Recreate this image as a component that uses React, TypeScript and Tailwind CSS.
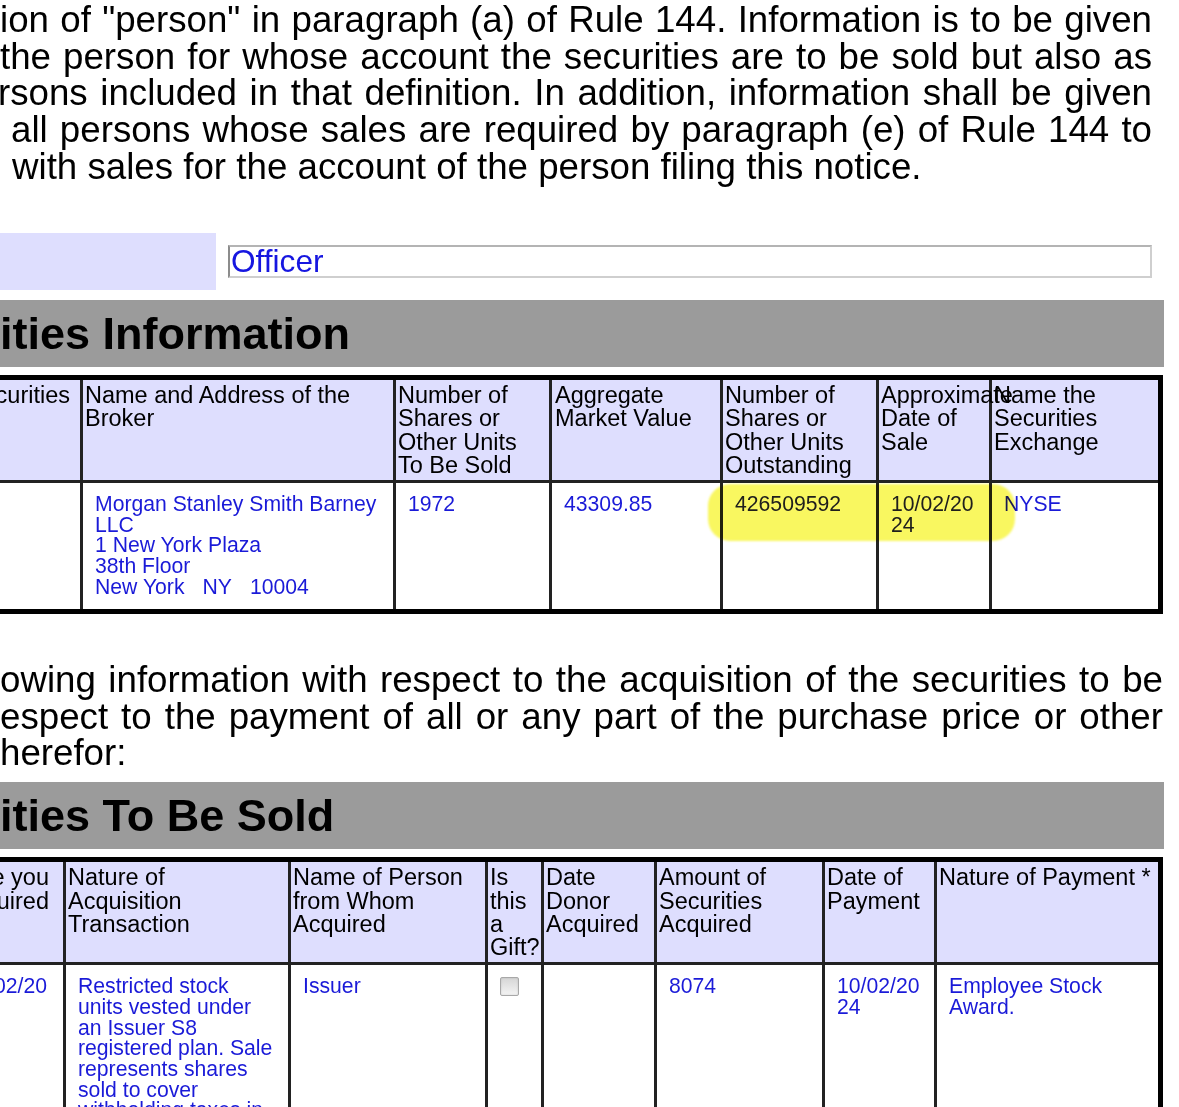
import React from "react";

const FONT = "font-['Liberation_Sans',Arial,sans-serif]";
const HEAD = "bg-[#dedefe] pt-[4px] pl-[2px] text-[23.5px] leading-[23.4px] text-black whitespace-nowrap";
const BODY = "bg-white pt-[11px] pl-[12px] text-[21.2px] leading-[20.7px] text-[#1a1ad8] whitespace-nowrap";
const JLINE = "text-justify [text-align-last:justify]";

function Lines({ items }: { items: string[] }) {
  return (
    <>
      {items.map((t, i) => (
        <div key={i}>{t}</div>
      ))}
    </>
  );
}

export default function App() {
  return (
    <div className={`relative w-[1179px] h-[1107px] overflow-hidden bg-white text-black ${FONT}`}>
      <div className="flex flex-col">
        {/* Paragraph 1 */}
        <div className="mt-[2px] w-[1152px] text-[36.7px] leading-[36.7px]">
          <div className={JLINE}>ion of "person" in paragraph (a) of Rule 144. Information is to be given</div>
          <div className={JLINE}>the person for whose account the securities are to be sold but also as</div>
          <div className={`${JLINE} -ml-[2px]`}>rsons included in that definition. In addition, information shall be given</div>
          <div className={`${JLINE} pl-[11px]`}>all persons whose sales are required by paragraph (e) of Rule 144 to</div>
          <div className="pl-[12px]">with sales for the account of the person filing this notice.</div>
        </div>

        {/* Relationship row */}
        <div className="mt-[47.5px] flex h-[57px] items-start">
          <div className="h-full w-[216px] bg-[#dedefe]" />
          <div className="ml-[12px] mt-[12px] h-[33px] w-[924px] border-2 border-[#cfcfcf] border-l-[#8c8c8c] border-t-[#b4b4b4] pl-[1px] text-[31.6px] leading-[29px] text-[#1616e0]">
            Officer
          </div>
        </div>

        {/* Title bar 1 */}
        <div className="mt-[10px] h-[67px] w-[1164px] bg-[#9b9b9b] pt-[11px] text-[45px] font-bold leading-[45px] text-black">
          ities Information
        </div>

        {/* Table 1 */}
        <div className="mt-[8px] -ml-[105px] grid w-[1268px] grid-cols-[180px_310px_153px_168px_153px_110px_166px] grid-rows-[100px_126px] gap-[3px] border-[5px] border-black bg-[#222]">
          <div className={`${HEAD} text-right pr-[10px]`}>curities</div>
          <div className={HEAD}><Lines items={["Name and Address of the", "Broker"]} /></div>
          <div className={HEAD}><Lines items={["Number of", "Shares or", "Other Units", "To Be Sold"]} /></div>
          <div className={`${HEAD} pl-[3px]`}><Lines items={["Aggregate", "Market Value"]} /></div>
          <div className={HEAD}><Lines items={["Number of", "Shares or", "Other Units", "Outstanding"]} /></div>
          <div className={`${HEAD} relative z-10 !bg-transparent`}>
            <div className="absolute inset-0 -z-10 bg-[#dedefe]" />
            <Lines items={["Approximate", "Date of", "Sale"]} />
          </div>
          <div className={HEAD}><Lines items={["Name the", "Securities", "Exchange"]} /></div>

          <div className={BODY} />
          <div className={BODY}>
            <Lines items={["Morgan Stanley Smith Barney", "LLC", "1 New York Plaza", "38th Floor"]} />
            <div>
              New York<span className="inline-block w-[18px]" />NY<span className="inline-block w-[18px]" />10004
            </div>
          </div>
          <div className={BODY}>1972</div>
          <div className={BODY}>43309.85</div>
          <div className={BODY}><span className="text-[#20204a]">426509592</span></div>
          <div className={BODY}><div className="text-[#20204a]"><Lines items={["10/02/20", "24"]} /></div></div>
          <div className={BODY}>NYSE</div>
        </div>

        {/* Paragraph 2 */}
        <div className="mt-[48px] w-[1163px] text-[36.7px] leading-[36.7px]">
          <div className={JLINE}>owing information with respect to the acquisition of the securities to be</div>
          <div className={JLINE}>espect to the payment of all or any part of the purchase price or other</div>
          <div>herefor:</div>
        </div>

        {/* Title bar 2 */}
        <div className="mt-[10px] h-[67px] w-[1164px] bg-[#9b9b9b] pt-[11px] text-[45px] font-bold leading-[45px] text-black">
          ities To Be Sold
        </div>

        {/* Table 2 */}
        <div className="mt-[8px] -ml-[105px] grid w-[1268px] grid-cols-[163px_222px_194px_53px_110px_165px_109px_221px] grid-rows-[100px_240px] gap-[3px] border-[5px] border-black bg-[#222]">
          <div className={`${HEAD} text-right pr-[14px]`}><Lines items={["e you", "uired"]} /></div>
          <div className={HEAD}><Lines items={["Nature of", "Acquisition", "Transaction"]} /></div>
          <div className={HEAD}><Lines items={["Name of Person", "from Whom", "Acquired"]} /></div>
          <div className={`${HEAD} pr-0`}><Lines items={["Is", "this", "a", "Gift?"]} /></div>
          <div className={HEAD}><Lines items={["Date", "Donor", "Acquired"]} /></div>
          <div className={HEAD}><Lines items={["Amount of", "Securities", "Acquired"]} /></div>
          <div className={HEAD}><Lines items={["Date of", "Payment"]} /></div>
          <div className={HEAD}>Nature of Payment *</div>

          <div className={`${BODY} text-right pr-[16px]`}>02/20</div>
          <div className={BODY}>
            <Lines
              items={[
                "Restricted stock",
                "units vested under",
                "an Issuer S8",
                "registered plan. Sale",
                "represents shares",
                "sold to cover",
                "withholding taxes in",
              ]}
            />
          </div>
          <div className={BODY}>Issuer</div>
          <div className="bg-white pl-[12px] pt-[12px]">
            <div className="h-[19px] w-[19px] rounded-[2px] border border-[#a8a8a8] bg-gradient-to-b from-[#d6d6d6] to-[#f4f4f4] shadow-[inset_0_0_2px_rgba(0,0,0,0.15)]" />
          </div>
          <div className={BODY} />
          <div className={BODY}>8074</div>
          <div className={BODY}><Lines items={["10/02/20", "24"]} /></div>
          <div className={BODY}><Lines items={["Employee Stock", "Award."]} /></div>
        </div>
      </div>

      {/* Highlighter mark */}
      <div className="pointer-events-none absolute left-[708px] top-[484px] h-[57px] w-[307px] rounded-[22px] bg-[#f9f760] mix-blend-multiply blur-[1px]" />
    </div>
  );
}
